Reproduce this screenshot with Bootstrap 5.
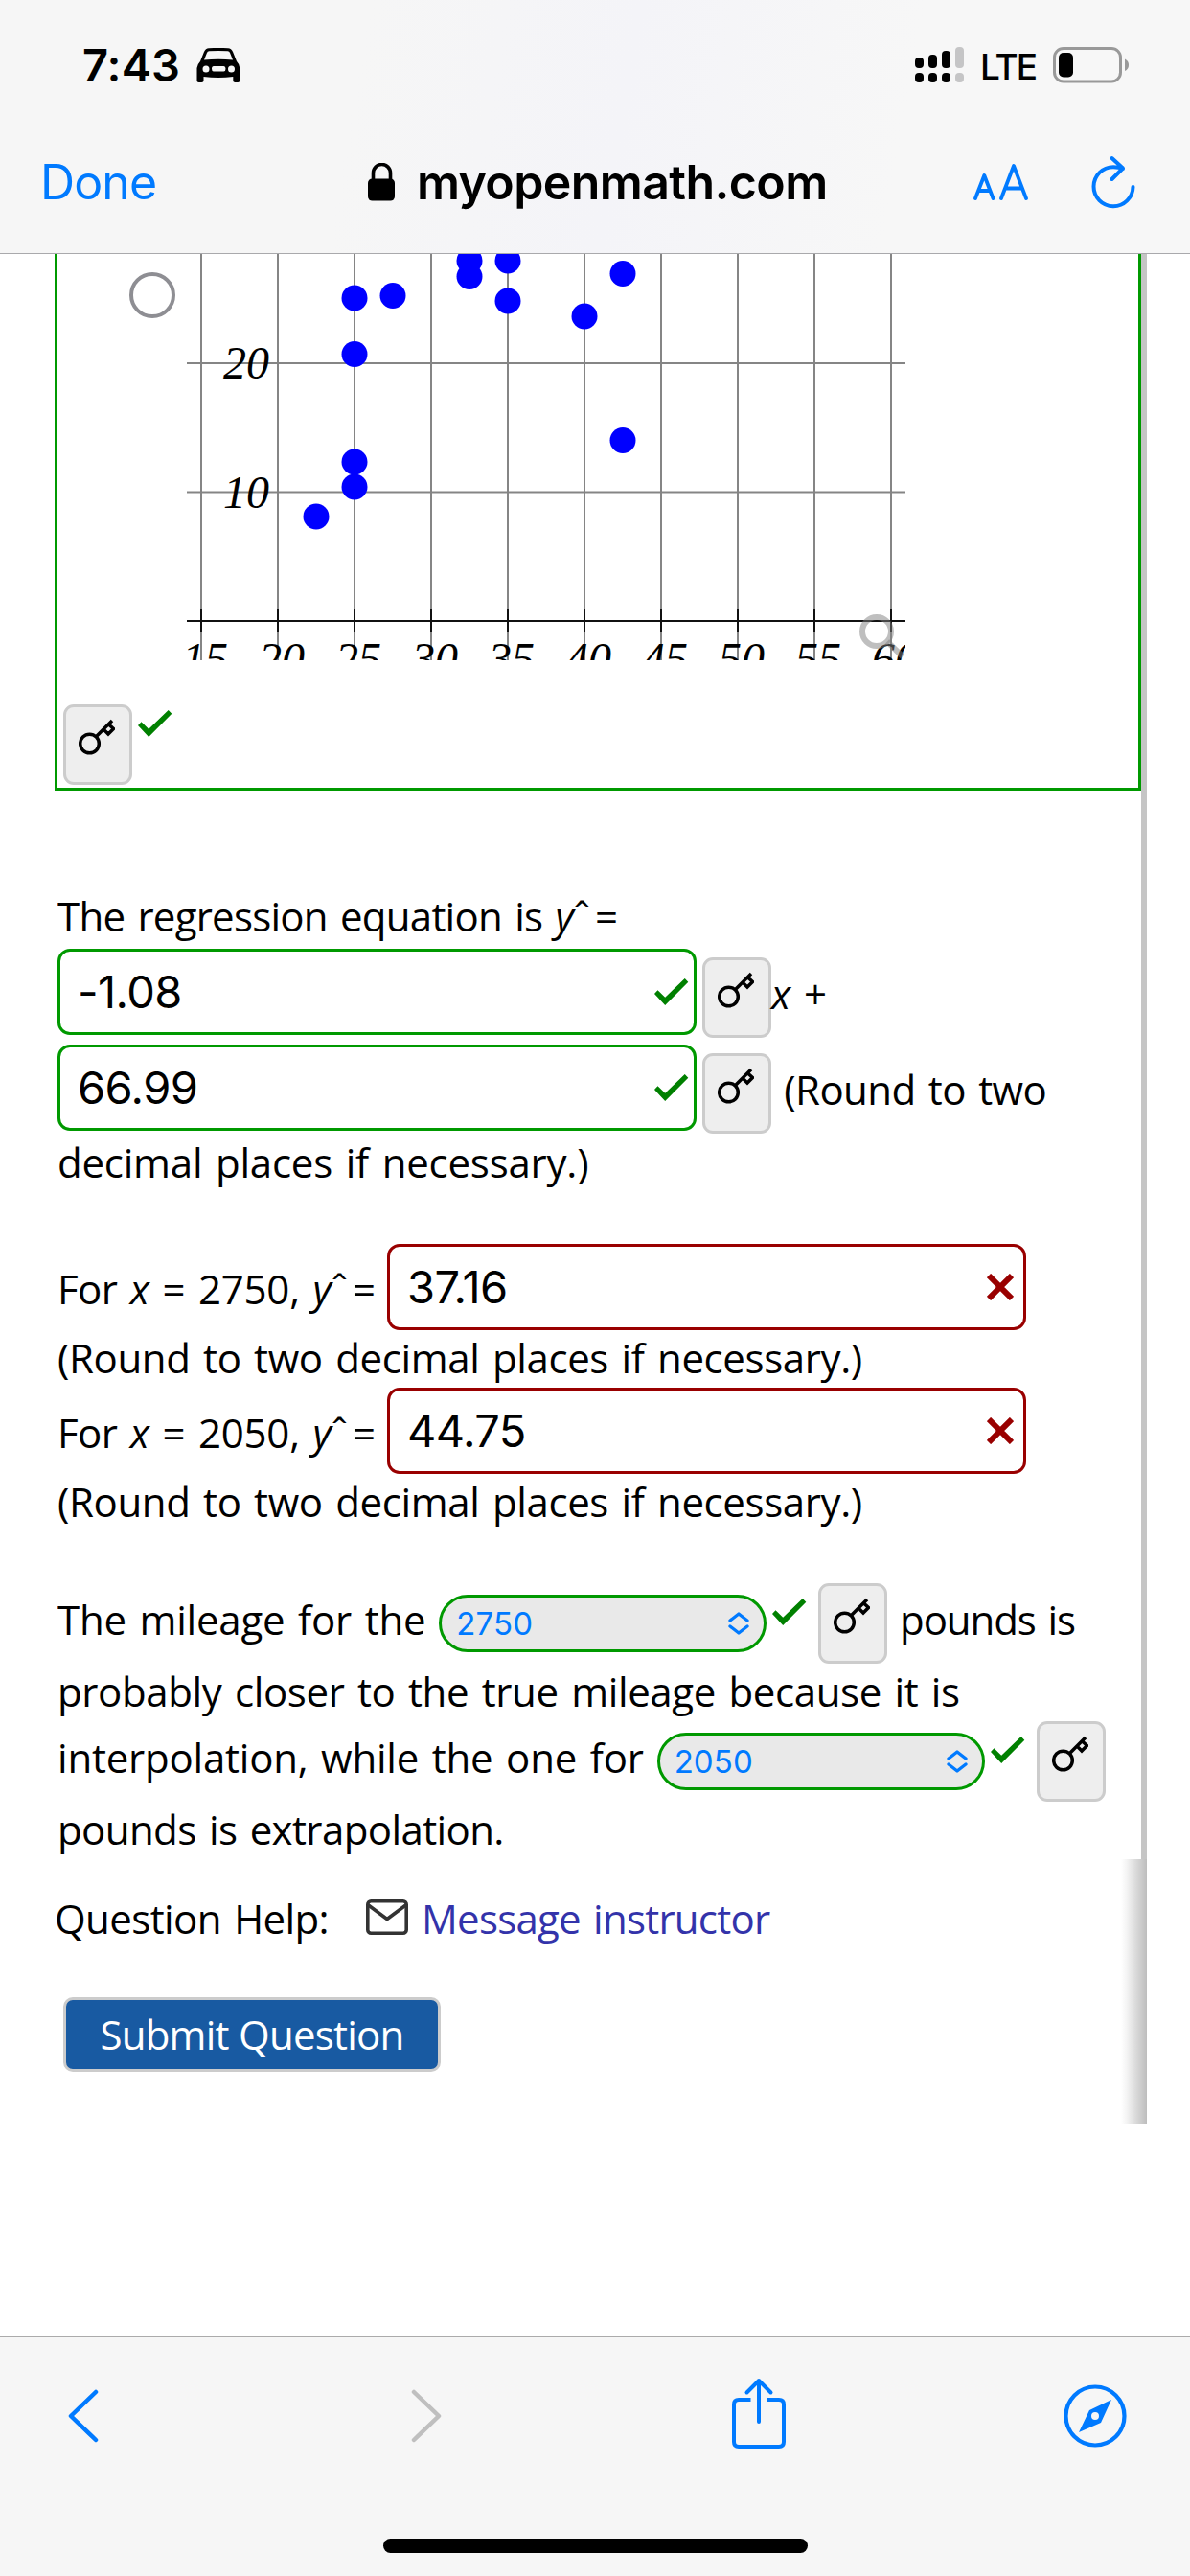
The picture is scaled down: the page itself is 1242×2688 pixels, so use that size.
<!DOCTYPE html>
<html lang="en">
<head>
<meta charset="utf-8">
<meta name="viewport" content="width=device-width, initial-scale=1">
<title>myopenmath.com</title>
<link rel="stylesheet" href="https://cdn.jsdelivr.net/npm/bootstrap@5.3.0/dist/css/bootstrap.min.css">
<style>
  :root { --ok: #009900; --bad: #990000; --ios: #007aff; }
  body { margin: 0; background: #fff; color: #000; font-family: "Open Sans", "Noto Sans", sans-serif; font-size: 42px; line-height: 50px; overflow: hidden; }
  svg { display: block; flex: none; }
  .ui { font-family: Inter, "Liberation Sans", sans-serif; word-spacing: normal; }
  .screen { width: 1242px; height: 2688px; overflow: hidden; }
  .topbar { height: 265px; background: linear-gradient(100deg, #f6f6f6 30%, #f4f4f8 52%, #f7f7f7 75%); border-bottom: 1px solid #a9a9ac; }
  .statusrow { height: 136px; padding: 0 63px 0 86px; }
  .clock { font-size: 47px; font-weight: 600; letter-spacing: .1px; }
  .car-icon { margin-left: 17px; }
  .carrier { font-size: 37px; font-weight: 500; letter-spacing: -2px; margin: 3px 18px 0 16px; }
  .addrrow { height: 108px; padding: 0 57px 0 42px; color: var(--ios); }
  .done { font-size: 50px; width: 343px; letter-spacing: -.9px; }
  .host { font-size: 50px; font-weight: 600; color: #000; letter-spacing: -.6px; margin-left: 22px; width: 583px; }
  .reload { margin-left: 65px; }
  .paper { width: 1197px; height: 1675px; border-right: 6px solid #c5c5c5; padding-left: 57px; word-spacing: 3px; }
  .choices { height: 560px; width: 1134px; border: 3px solid var(--ok); border-top: 0; padding-left: 6px; }
  .bullet { width: 48px; height: 48px; border: 4px solid #8e8e93; border-radius: 50%; margin: 19px 12px 0 69px; flex: none; }
  .plotwrap { height: 425px; margin-bottom: 45px; }
  .keybtn { width: 72px; height: 84px; border: 3px solid #ccc; border-radius: 11px; background: #eee; padding: 12px 0 0 13px; flex: none; }
  .boxtick { margin: 6px 0 0 6px; }
  .line { display: flex; align-items: flex-start; padding-left: 3px; white-space: pre; }
  .h-label { height: 59px; margin-top: 106px; }
  .h-slope { height: 100px; }
  .h-icept { height: 98px; }
  .h-last { height: 110px; }
  .h-eval { height: 94px; }
  .h-text { height: 56px; }
  .h-pick { height: 88px; }
  .h-slope > span:not(.keybtn), .h-slope > i, .h-icept > span:not(.keybtn) { margin-top: 22px; }
  .h-eval > span, .h-eval > i { margin-top: 22px; }
  .h-pick > span:not(.keybtn) { margin-top: 13px; }
  .h-slope .keybtn, .h-icept .keybtn { margin: 9px 0 0 6px; }
  .h-pick .pick { margin: 12px 0 0 14px; }
  .h-pick > svg { margin: 16px 12px 0 6px; }
  .eq { margin-left: 5px; }
  .k0 { letter-spacing: -.22px; }
  .k1 { letter-spacing: -.38px; }
  .k2 { letter-spacing: -.6px; }
  .k3 { letter-spacing: -.75px; }
  .k4 { letter-spacing: -1.1px; }
  .field { width: 667px; height: 90px; border: 3px solid var(--ok); border-radius: 13px; padding: 0 5px 0 18px; font-size: 47px; letter-spacing: -.6px; flex: none; }
  .field.wrong { border-color: var(--bad); padding-right: 10px; margin-left: 12px; }
  .pick { width: 342px; height: 60px; border: 3px solid var(--ok); border-radius: 30px; background: #e9e9e9; color: var(--ios); font-size: 33px; padding: 0 15px 0 15px; letter-spacing: .1px; flex: none; }
  .tail { width: 1197px; height: 276px; background: linear-gradient(to left, #bdbdbd, #d6d6d6 10px, #f4f4f4 21px, #fff 27px); padding-left: 57px; word-spacing: 3px; }
  .helprow { height: 108px; padding-top: 37px; margin-bottom: 36px; }
  .envelope { margin: 5px 14px 0 39px; }
  .msg { color: #3333aa; text-decoration: none; }
  .submit { width: 394px; height: 78px; margin-left: 9px; border: 3px solid #ccc; border-radius: 10px; background: #185aa2; color: #fff; font-size: 42px; line-height: 50px; padding: 0; }
  .toolbar { height: 250px; background: #f6f6f6; border-top: 1px solid #ababab; }
  .toolicons { height: 210px; padding-top: 42px; }
  .i-back { margin: 12px 0 0 71px; }
  .i-fwd { margin: 12px 0 0 326px; }
  .i-share { margin-left: 302px; }
  .i-compass { margin: 7px 0 0 289px; }
  .homebar { width: 443px; height: 15px; border-radius: 8px; background: #000; }
</style>
</head>
<body>
<svg width="0" height="0" class="position-absolute">
  <symbol id="key" viewBox="0 0 38 38"><g fill="none" stroke="#000" stroke-width="3.500"><circle cx="11.500" cy="26" r="9.800"/><path d="M18.500 18.500 35 2M26 11l5 5 5.500-5.500L31 5.500"/></g></symbol>
  <symbol id="tick" viewBox="0 0 36 28"><path fill="#008000" d="M0 16l3.500-3.700 7.700 7.400L31.700 0 35.300 3.800 11.200 28z"/></symbol>
  <symbol id="cross" viewBox="0 0 28 28"><path d="M2 2 26 26M26 2 2 26" stroke="#990000" stroke-width="6"/></symbol>
  <symbol id="updown" viewBox="0 0 22 24"><path d="M2 9 11 2l9 7M2 15l9 7 9-7" fill="none" stroke="#007aff" stroke-width="3.300" stroke-linecap="round" stroke-linejoin="round"/></symbol>
</svg>

<div class="screen d-flex flex-column">
  <header class="topbar ui">
    <div class="statusrow d-flex align-items-center">
      <span class="clock">7:43</span>
      <svg class="car-icon" width="46" height="37" viewBox="0 0 46 37"><path d="M4 14 8 4Q9.500.5 13 .3 23-.5 33 .3q3.500.2 5 3.700l4 10q3 3 3.300 7v13q0 2-2 2h-3q-2 0-2-2v-4Q23 32 7.500 30v4q0 2-2 2h-3q-2 0-2-2V21Q1 17 4 14zM8 12.500q15-1.500 30 0L35 5q-.6-1.600-2.300-1.700-9.700-.8-19.400 0Q11.600 3.400 11 5zM10 18.500a3.300 3.300 0 1 0 0 7 3.300 3.300 0 1 0 0-7zm26.500 0a3.300 3.300 0 1 0 0 7 3.300 3.300 0 1 0 0-7zM18 19q-2 0-2 2.800T18 24.500h10.500q2 0 2-2.700T28.500 19z" fill-rule="evenodd"/></svg>
      <svg class="ms-auto" width="52" height="38" viewBox="0 0 52 38"><g><rect y="11" width="9" height="11" rx="4"/><rect x="14" y="8" width="9" height="14" rx="4"/><rect x="28" y="4" width="9" height="18" rx="4"/><rect y="27" width="9" height="10" rx="4"/><rect x="14" y="27" width="9" height="10" rx="4"/><rect x="28" y="27" width="9" height="10" rx="4"/></g><g fill="#c5c5c6"><rect x="42" width="9" height="22" rx="4"/><rect x="42" y="27" width="9" height="10" rx="4"/></g></svg>
      <span class="carrier">LTE</span>
      <svg width="80" height="38" viewBox="0 0 80 38"><rect x="1.500" y="1.500" width="69" height="34.500" rx="9.500" fill="none" stroke="#999" stroke-width="3"/><rect x="6" y="6" width="15" height="25.500" rx="5"/><path d="M75 12.500q4 2 4 6.300t-4 6.300z" fill="#999"/></svg>
    </div>
    <div class="addrrow d-flex align-items-center">
      <span class="done">Done</span>
      <svg width="29" height="40" viewBox="0 0 29 40"><path d="M5.500 18v-7.500a9 9 0 0 1 18 0V18" fill="none" stroke="#000" stroke-width="3.600"/><rect y="16.500" width="28" height="23" rx="4.500"/></svg>
      <span class="host">myopenmath.com</span>
      <svg width="58" height="38" viewBox="0 0 58 38" fill="none" stroke="#007aff" stroke-width="3.800" stroke-linecap="round" stroke-linejoin="round"><path d="M2 36 11.300 12 20.500 36M5 28h12.500M29 36 42 2l13 34M33.500 25.500h17"/></svg>
      <svg class="reload" width="46" height="56" viewBox="0 0 46 56" fill="none" stroke="#007aff" stroke-width="4" stroke-linecap="round" stroke-linejoin="round"><path d="M33 14Q28.500 12.200 23 12.200A20.500 20.500 0 1 0 43.500 33M21.500 3 33 13.500 21.500 25"/></svg>
    </div>
  </header>

  <main>
    <section class="paper">
      <div class="choices">
        <div class="plotwrap d-flex align-items-start">
          <span class="bullet"></span>
          <svg width="750" height="424" viewBox="195 265 750 424">
            <path d="M210 265v424M290 265v424M370 265v424M450 265v424M530 265v424M610 265v424M690 265v424M770 265v424M850 265v424M930 265v424M195 379h750M195 513.500h750" stroke="#858585" stroke-width="2"/>
            <path d="M195 648h750M210 636v24M290 636v24M370 636v24M450 636v24M530 636v24M610 636v24M690 636v24M770 636v24M850 636v24M930 636v24" stroke="#111" stroke-width="2"/>
            <g font-family="Liberation Serif, serif" font-style="italic" font-size="48">
              <g text-anchor="end"><text x="281" y="395">20</text><text x="281" y="530">10</text></g>
              <g text-anchor="middle"><text x="214" y="704">15</text><text x="294" y="704">20</text><text x="374" y="704">25</text><text x="454" y="704">30</text><text x="534" y="704">35</text><text x="614" y="704">40</text><text x="694" y="704">45</text><text x="774" y="704">50</text><text x="854" y="704">55</text><text x="934" y="704">60</text></g>
            </g>
            <g fill="#0000ff"><circle cx="370" cy="311" r="13.500"/><circle cx="410" cy="308.500" r="13.500"/><circle cx="490" cy="272" r="13.500"/><circle cx="490" cy="288.500" r="13.500"/><circle cx="530" cy="272" r="13.500"/><circle cx="530" cy="314" r="13.500"/><circle cx="610" cy="330" r="13.500"/><circle cx="370" cy="369.500" r="13.500"/><circle cx="370" cy="482" r="13.500"/><circle cx="370" cy="508" r="13.500"/><circle cx="330" cy="539" r="13.500"/><circle cx="650" cy="285.500" r="13.500"/><circle cx="650" cy="459.500" r="13.500"/></g>
            <g fill="none" stroke="#808080" stroke-opacity=".5" stroke-width="6"><circle cx="915" cy="659" r="15"/><path d="M926 669.500 942 685"/></g>
          </svg>
        </div>
        <div class="d-flex">
          <span class="keybtn"><svg width="38" height="38"><use href="#key"/></svg></span>
          <svg class="boxtick" width="36" height="28"><use href="#tick"/></svg>
        </div>
      </div>

      <div class="line h-label"><span class="k3">The regression equation is </span><i>y</i><span>ˆ</span><span class="eq">=</span></div>
      <div class="line h-slope"><div class="field ui d-flex align-items-center justify-content-between"><span>-1.08</span><svg width="36" height="28"><use href="#tick"/></svg></div><span class="keybtn"><svg width="38" height="38"><use href="#key"/></svg></span><i>x</i><span> +</span></div>
      <div class="line h-icept"><div class="field ui d-flex align-items-center justify-content-between"><span>66.99</span><svg width="36" height="28"><use href="#tick"/></svg></div><span class="keybtn"><svg width="38" height="38"><use href="#key"/></svg></span><span class="k2"> (Round to two</span></div>
      <div class="line h-last"><span class="k0">decimal places if necessary.)</span></div>

      <div class="line h-eval"><span class="k2">For </span><i>x</i><span class="k0"> = 2750, </span><i>y</i><span>ˆ</span><span class="eq">=</span><div class="field wrong ui d-flex align-items-center justify-content-between"><span>37.16</span><svg width="28" height="28"><use href="#cross"/></svg></div></div>
      <div class="line h-text"><span class="k1">(Round to two decimal places if necessary.)</span></div>
      <div class="line h-eval"><span class="k2">For </span><i>x</i><span class="k0"> = 2050, </span><i>y</i><span>ˆ</span><span class="eq">=</span><div class="field wrong ui d-flex align-items-center justify-content-between"><span>44.75</span><svg width="28" height="28"><use href="#cross"/></svg></div></div>
      <div class="line h-last"><span class="k1">(Round to two decimal places if necessary.)</span></div>

      <div class="line h-pick"><span class="k0">The mileage for the</span><div class="pick ui d-flex align-items-center justify-content-between"><span>2750</span><svg width="22" height="24"><use href="#updown"/></svg></div><svg width="36" height="28"><use href="#tick"/></svg><span class="keybtn"><svg width="38" height="38"><use href="#key"/></svg></span><span class="k4"> pounds is</span></div>
      <div class="line h-text"><span class="k1">probably closer to the true mileage because it is</span></div>
      <div class="line h-pick"><span class="k0">interpolation, while the one for</span><div class="pick ui d-flex align-items-center justify-content-between"><span>2050</span><svg width="22" height="24"><use href="#updown"/></svg></div><svg width="36" height="28"><use href="#tick"/></svg><span class="keybtn"><svg width="38" height="38"><use href="#key"/></svg></span></div>
      <div class="line h-text"><span class="k2">pounds is extrapolation.</span></div>
    </section>
    <section class="tail">
      <div class="helprow d-flex align-items-start"><span class="k2">Question Help:</span>
        <svg class="envelope" width="44" height="37" viewBox="0 0 44 37" fill="none" stroke="#333" stroke-width="3.600" stroke-linejoin="round"><rect x="1.800" y="1.800" width="40.400" height="33.400" rx="3.500"/><path d="M2.500 6 22 20.500 41.500 6"/></svg>
        <a href="#" class="msg k3">Message instructor</a></div>
      <button type="button" class="submit btn k3">Submit Question</button>
    </section>
  </main>

  <footer class="toolbar mt-auto d-flex flex-column align-items-center">
    <div class="toolicons d-flex align-items-start w-100">
      <svg class="i-back" width="32" height="56" viewBox="0 0 32 56" fill="none" stroke="#007aff" stroke-width="4.500" stroke-linecap="round" stroke-linejoin="round"><path d="M29 3 3 28l26 25"/></svg>
      <svg class="i-fwd" width="32" height="56" viewBox="0 0 32 56" fill="none" stroke="#bfbfbf" stroke-width="4.500" stroke-linecap="round" stroke-linejoin="round"><path d="M3 3l26 25L3 53"/></svg>
      <svg class="i-share" width="58" height="74" viewBox="0 0 58 74" fill="none" stroke="#007aff" stroke-width="4" stroke-linecap="round" stroke-linejoin="round"><path d="M20.500 23H8q-5 0-5 5v39q0 5 5 5h42q5 0 5-5V28q0-5-5-5H37.500" stroke-linecap="butt"/><path d="M29 46V3M16.500 15.500 29 3l12.500 12.500"/></svg>
      <svg class="i-compass" width="66" height="66" viewBox="0 0 66 66"><circle cx="33" cy="33" r="30.500" fill="none" stroke="#007aff" stroke-width="4.200"/><path d="M50 16 39 40 16 50 27 27zM33 29a4 4 0 1 0 0 8 4 4 0 1 0 0-8z" fill="#007aff" fill-rule="evenodd"/></svg>
    </div>
    <div class="homebar"></div>
  </footer>
</div>
<script src="https://cdn.jsdelivr.net/npm/bootstrap@5.3.0/dist/js/bootstrap.bundle.min.js"></script>
</body>
</html>
